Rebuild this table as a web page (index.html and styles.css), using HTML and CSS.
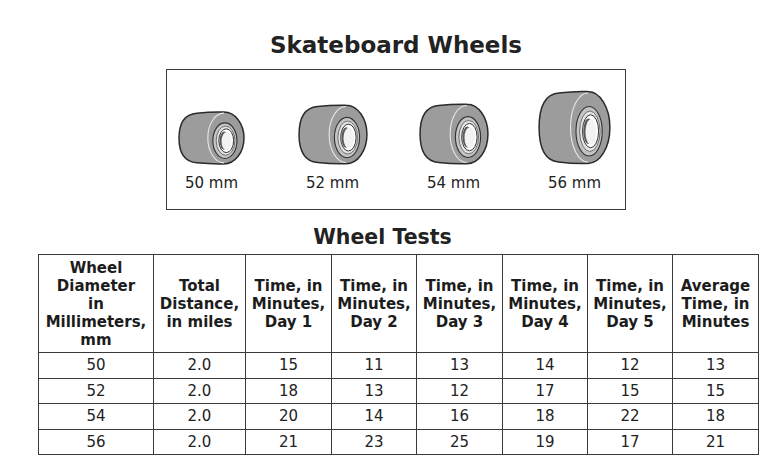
FILE: index.html
```html
<!DOCTYPE html>
<html>
<head>
<meta charset="utf-8">
<link rel="stylesheet" href="styles.css">
<title>Skateboard Wheels</title>
</head>
<body>
<div class="page">
  <section class="figure">
    <h1 class="title">Skateboard Wheels</h1>
    <div class="wheel-box">
      <div class="wheel">
        <svg class="wheel-svg w50" viewBox="0 0 100 100" preserveAspectRatio="none">
          <path class="tire" d="M68.5,2 C50,1.5 40,2.5 28,4 C8,6 1.5,24 1.5,50 C1.5,76 8,94 28,96 C40,97.5 50,98.5 68.5,98 A30,48 0 0 0 68.5,2 Z"/>
          <path class="rim-light" d="M68.5,4 A24,46 0 0 0 68.5,96"/>
          <ellipse class="hub" cx="70" cy="55" rx="18" ry="33"/>
          <ellipse class="hub-ring" cx="71" cy="55" rx="14" ry="27"/>
          <ellipse class="bearing" cx="72" cy="55" rx="11" ry="22"/>
          <ellipse class="hole" cx="69" cy="55" rx="7" ry="17"/>
          <ellipse class="hole-light" cx="72.5" cy="56" rx="7.5" ry="17"/>
        </svg>
        <span class="wheel-label">50 mm</span>
      </div>
      <div class="wheel">
        <svg class="wheel-svg w52" viewBox="0 0 100 100" preserveAspectRatio="none">
          <path class="tire" d="M68.5,2 C50,1.5 40,2.5 28,4 C8,6 1.5,24 1.5,50 C1.5,76 8,94 28,96 C40,97.5 50,98.5 68.5,98 A30,48 0 0 0 68.5,2 Z"/>
          <path class="rim-light" d="M68.5,4 A24,46 0 0 0 68.5,96"/>
          <ellipse class="hub" cx="70" cy="55" rx="18" ry="33"/>
          <ellipse class="hub-ring" cx="71" cy="55" rx="14" ry="27"/>
          <ellipse class="bearing" cx="72" cy="55" rx="11" ry="22"/>
          <ellipse class="hole" cx="69" cy="55" rx="7" ry="17"/>
          <ellipse class="hole-light" cx="72.5" cy="56" rx="7.5" ry="17"/>
        </svg>
        <span class="wheel-label">52 mm</span>
      </div>
      <div class="wheel">
        <svg class="wheel-svg w54" viewBox="0 0 100 100" preserveAspectRatio="none">
          <path class="tire" d="M68.5,2 C50,1.5 40,2.5 28,4 C8,6 1.5,24 1.5,50 C1.5,76 8,94 28,96 C40,97.5 50,98.5 68.5,98 A30,48 0 0 0 68.5,2 Z"/>
          <path class="rim-light" d="M68.5,4 A24,46 0 0 0 68.5,96"/>
          <ellipse class="hub" cx="70" cy="55" rx="18" ry="33"/>
          <ellipse class="hub-ring" cx="71" cy="55" rx="14" ry="27"/>
          <ellipse class="bearing" cx="72" cy="55" rx="11" ry="22"/>
          <ellipse class="hole" cx="69" cy="55" rx="7" ry="17"/>
          <ellipse class="hole-light" cx="72.5" cy="56" rx="7.5" ry="17"/>
        </svg>
        <span class="wheel-label">54 mm</span>
      </div>
      <div class="wheel">
        <svg class="wheel-svg w56" viewBox="0 0 100 100" preserveAspectRatio="none">
          <path class="tire" d="M68.5,2 C50,1.5 40,2.5 28,4 C8,6 1.5,24 1.5,50 C1.5,76 8,94 28,96 C40,97.5 50,98.5 68.5,98 A30,48 0 0 0 68.5,2 Z"/>
          <path class="rim-light" d="M68.5,4 A24,46 0 0 0 68.5,96"/>
          <ellipse class="hub" cx="70" cy="55" rx="18" ry="33"/>
          <ellipse class="hub-ring" cx="71" cy="55" rx="14" ry="27"/>
          <ellipse class="bearing" cx="72" cy="55" rx="11" ry="22"/>
          <ellipse class="hole" cx="69" cy="55" rx="7" ry="17"/>
          <ellipse class="hole-light" cx="72.5" cy="56" rx="7.5" ry="17"/>
        </svg>
        <span class="wheel-label">56 mm</span>
      </div>
    </div>
  </section>

  <h2 class="table-title">Wheel Tests</h2>
  <table class="tests">
    <colgroup>
      <col class="c1"><col class="c2"><col class="c3"><col class="c4">
      <col class="c5"><col class="c6"><col class="c7"><col class="c8">
    </colgroup>
    <thead>
      <tr class="head-row">
        <th>Wheel<br>Diameter<br>in<br>Millimeters,<br>mm</th>
        <th>Total<br>Distance,<br>in miles</th>
        <th>Time, in<br>Minutes,<br>Day 1</th>
        <th>Time, in<br>Minutes,<br>Day 2</th>
        <th>Time, in<br>Minutes,<br>Day 3</th>
        <th>Time, in<br>Minutes,<br>Day 4</th>
        <th>Time, in<br>Minutes,<br>Day 5</th>
        <th>Average<br>Time, in<br>Minutes</th>
      </tr>
    </thead>
    <tbody>
      <tr><td>50</td><td>2.0</td><td>15</td><td>11</td><td>13</td><td>14</td><td>12</td><td>13</td></tr>
      <tr><td>52</td><td>2.0</td><td>18</td><td>13</td><td>12</td><td>17</td><td>15</td><td>15</td></tr>
      <tr><td>54</td><td>2.0</td><td>20</td><td>14</td><td>16</td><td>18</td><td>22</td><td>18</td></tr>
      <tr><td>56</td><td>2.0</td><td>21</td><td>23</td><td>25</td><td>19</td><td>17</td><td>21</td></tr>
    </tbody>
  </table>
</div>
</body>
</html>
```

FILE: styles.css
```css
* { box-sizing: border-box; }

html, body {
  margin: 0;
  padding: 0;
  background: #ffffff;
}

body {
  font-family: "DejaVu Sans", Verdana, "Liberation Sans", sans-serif;
  color: #1c1c1c;
}

.page {
  padding-top: 32px;
}

.figure {
  width: 460px;
  margin-left: 166px;
}

.title {
  margin: 0;
  font-size: 23px;
  line-height: 26px;
  font-weight: bold;
  text-align: center;
  color: #222;
}

.wheel-box {
  margin-top: 11px;
  height: 141px;
  border: 1.5px solid #3a3a3a;
  display: flex;
  align-items: flex-end;
  gap: 41px;
  padding: 0 0 17px 4.5px;
}

.wheel {
  width: 80px;
  display: flex;
  flex-direction: column;
  align-items: center;
}

.wheel-svg {
  display: block;
  overflow: visible;
}

.w50 { width: 67px; height: 54px; }
.w52 { width: 70px; height: 61px; }
.w54 { width: 70px; height: 62px; }
.w56 { width: 73px; height: 75px; }

.tire {
  fill: #9c9c9c;
  stroke: #2b2b2b;
  stroke-width: 1.5;
  vector-effect: non-scaling-stroke;
}

.rim-light {
  fill: none;
  stroke: #e8e8e8;
  stroke-width: 1.1;
  vector-effect: non-scaling-stroke;
}

.hub {
  fill: #c4c4c4;
  stroke: #333;
  stroke-width: 1.1;
  vector-effect: non-scaling-stroke;
}

.hub-ring {
  fill: #e4e4e4;
  stroke: #555;
  stroke-width: 0.8;
  vector-effect: non-scaling-stroke;
}

.bearing {
  fill: #ffffff;
  stroke: #333;
  stroke-width: 1;
  vector-effect: non-scaling-stroke;
}

.hole { fill: #5a5a5a; }
.hole-light { fill: #f2f2f2; }

.wheel-label {
  margin-top: 9px;
  font-size: 15px;
  line-height: 18px;
  color: #222;
  white-space: nowrap;
}

.table-title {
  margin: 15px 0 5px 38px;
  width: 720px;
  padding-right: 31px;
  font-size: 20.5px;
  line-height: 24px;
  font-weight: bold;
  text-align: center;
  color: #222;
}

.tests {
  margin-left: 38px;
  width: 720px;
  table-layout: fixed;
  border-collapse: collapse;
  font-size: 15px;
}

.c1 { width: 115px; }
.c2 { width: 92px; }
.c3 { width: 86px; }
.c4 { width: 85px; }
.c5 { width: 86px; }
.c6 { width: 85px; }
.c7 { width: 85px; }
.c8 { width: 86px; }

.tests th,
.tests td {
  border: 1.5px solid #3a3a3a;
  text-align: center;
  vertical-align: middle;
  padding: 0 1px;
  white-space: nowrap;
}

.tests th {
  font-weight: bold;
  line-height: 18px;
  color: #1c1c1c;
}

.head-row { height: 98px; }

.tests td {
  height: 25.5px;
  line-height: 18px;
  color: #222;
}
```
